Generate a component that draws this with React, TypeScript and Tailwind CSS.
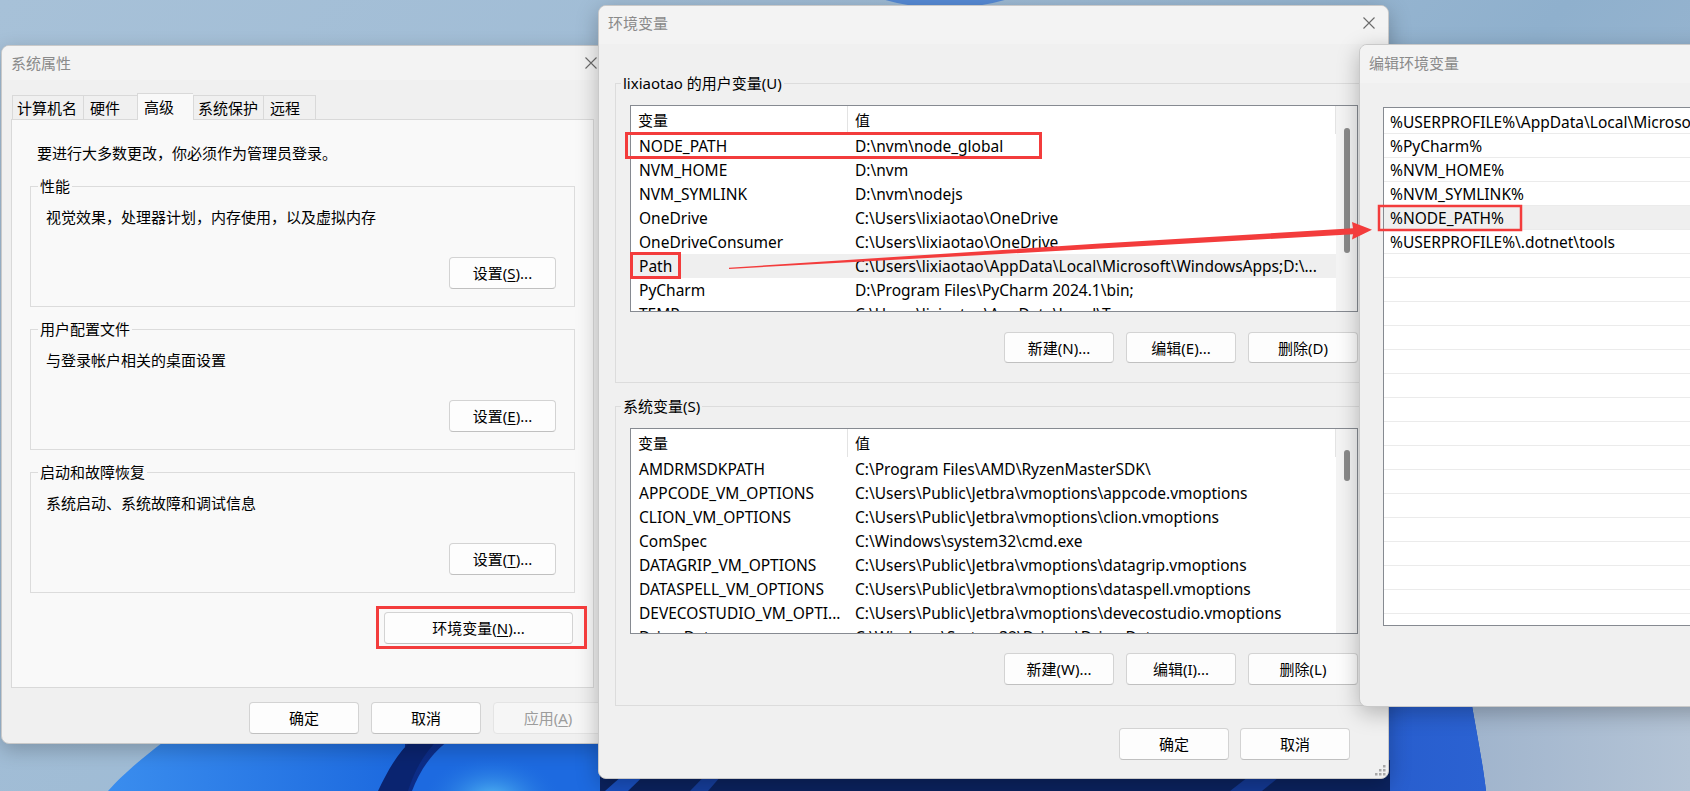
import React from "react";

const F = "font-['Noto_Sans','Noto_Sans_CJK_SC',sans-serif]";

function XIcon() {
  return (
    <svg width="12" height="12" viewBox="0 0 12 12" className="shrink-0">
      <path d="M0.5 0.5 L11.5 11.5 M11.5 0.5 L0.5 11.5" stroke="#6b6b6b" strokeWidth="1.1" />
    </svg>
  );
}

function Btn({
  className = "",
  disabled = false,
  children,
}: {
  className?: string;
  disabled?: boolean;
  children: React.ReactNode;
}) {
  return (
    <div
      className={`flex shrink-0 items-center justify-center rounded-[4px] border ${
        disabled
          ? "border-[#e4e4e4] bg-[#f6f6f6] text-[#9c9c9c]"
          : "border-[#d3d3d3] border-b-[#c0c0c0] bg-[#fdfdfd] text-black"
      } ${className}`}
    >
      {children}
    </div>
  );
}

function U({ children }: { children: React.ReactNode }) {
  return <span className="underline underline-offset-[2px]">{children}</span>;
}

/* ---------------- wallpaper ---------------- */
function Wallpaper() {
  return (
    <svg className="absolute inset-0" width="1690" height="791" viewBox="0 0 1690 791">
      <defs>
        <linearGradient id="sky" x1="0" y1="0" x2="1" y2="0.4">
          <stop offset="0" stopColor="#a7c1d8" />
          <stop offset="0.55" stopColor="#9dbad4" />
          <stop offset="0.8" stopColor="#8fb0cd" />
          <stop offset="1" stopColor="#9cb7d1" />
        </linearGradient>
        <linearGradient id="skyB" x1="0" y1="0" x2="1" y2="0">
          <stop offset="0" stopColor="#98aec9" />
          <stop offset="1" stopColor="#b4c4d6" />
        </linearGradient>
        <linearGradient id="bloomL" x1="0" y1="0" x2="1" y2="0">
          <stop offset="0" stopColor="#3a8dee" />
          <stop offset="0.25" stopColor="#1763dc" />
          <stop offset="1" stopColor="#0b45c0" />
        </linearGradient>
        <linearGradient id="bloomR" x1="0" y1="0" x2="1" y2="0">
          <stop offset="0" stopColor="#0c2c86" />
          <stop offset="0.4" stopColor="#1646b8" />
          <stop offset="1" stopColor="#2b62d2" />
        </linearGradient>
        <radialGradient id="cyan" cx="0.5" cy="0.5" r="0.5">
          <stop offset="0" stopColor="#58c0f5" />
          <stop offset="1" stopColor="#1e6ee0" stopOpacity="0" />
        </radialGradient>
      </defs>
      <rect width="1690" height="791" fill="url(#sky)" />
      <rect x="1380" y="690" width="310" height="101" fill="url(#skyB)" />
      <ellipse cx="945" cy="-58" rx="125" ry="66" fill="#3d7ad6" opacity="0.75" />
      <path d="M108 791 C125 772 150 750 200 716 L200 640 L1470 640 L1471 700 C1477 735 1483 765 1486 791 Z" fill="url(#bloomL)" />
      <path d="M405 791 L405 700 L1470 700 L1471 700 C1477 735 1483 765 1486 791 Z" fill="url(#bloomR)" />
      <path d="M378 791 C388 770 398 752 414 738 L440 738 C424 752 414 772 408 791 Z" fill="#0a2470" />
      <path d="M412 791 C420 770 432 752 452 738 L600 738 L600 791 Z" fill="#1d6ae0" />
      <ellipse cx="492" cy="800" rx="70" ry="45" fill="url(#cyan)" />
      <path d="M600 760 L1390 760 L1390 791 L600 791 Z" fill="#0b2360" />
      <path d="M605 791 L640 760 L660 760 L628 791 Z" fill="#1a52c4" />
      <path d="M690 791 L720 760 L735 760 L708 791 Z" fill="#163f9e" />
      <path d="M1230 791 L1270 760 L1300 760 L1262 791 Z" fill="#143a96" />
    </svg>
  );
}

/* ---------------- 系统属性 ---------------- */
function Tab({
  w,
  pl,
  selected = false,
  last = false,
  children,
}: {
  w: string;
  pl: string;
  selected?: boolean;
  last?: boolean;
  children: React.ReactNode;
}) {
  return (
    <div
      className={`${w} ${pl} shrink-0 flex items-center border-l border-t border-[#d9d9d9] ${
        selected ? "h-[27px] bg-[#f9f9f9]" : "h-[25px] border-b bg-[#f0f0f0]"
      } ${last ? "border-r" : ""}`}
    >
      {children}
    </div>
  );
}

function Group({ title, desc, btn }: { title: string; desc: string; btn: React.ReactNode }) {
  return (
    <fieldset className="ml-[18px] w-[545px] border border-[#dcdcdc] pl-[7px] pr-[18px] pb-[17px]">
      <legend className="px-[2px] leading-[20px]">{title}</legend>
      <div className="mt-[11px] ml-[8px]">{desc}</div>
      <div className="mt-[30px] flex justify-end">
        <Btn className="w-[107px] h-[32px]">{btn}</Btn>
      </div>
    </fieldset>
  );
}

function SystemProps() {
  return (
    <div className="absolute left-[1px] top-[45px] w-[604px] h-[699px] rounded-[8px] border border-[#c9c9c9] bg-[#f0f0f0] shadow-[0_6px_20px_rgba(0,0,0,0.22)] overflow-hidden flex flex-col">
      <div className="h-[34px] shrink-0 flex items-center justify-between pl-[9px] pr-[7px] bg-[#f3f3f3] text-[#8a8a8a]">
        <span>系统属性</span>
        <XIcon />
      </div>
      <div className="mt-[13px] ml-[10px] h-[27px] -mb-px flex items-end relative z-10 shrink-0">
        <Tab w="w-[71px]" pl="pl-[4px]">计算机名</Tab>
        <Tab w="w-[54px]" pl="pl-[6px]">硬件</Tab>
        <Tab w="w-[56px]" pl="pl-[6px]" selected>
          高级
        </Tab>
        <Tab w="w-[70px]" pl="pl-[4px]">系统保护</Tab>
        <Tab w="w-[53px]" pl="pl-[6px]" last>
          远程
        </Tab>
      </div>
      <div className="ml-[9px] w-[583px] h-[569px] shrink-0 border border-[#d9d9d9] bg-[#f9f9f9] flex flex-col">
        <div className="mt-[23px] pl-[25px]">要进行大多数更改，你必须作为管理员登录。</div>
        <div className="mt-[13px]">
          <Group
            title="性能"
            desc="视觉效果，处理器计划，内存使用，以及虚拟内存"
            btn={
              <>
                设置(<U>S</U>)...
              </>
            }
          />
        </div>
        <div className="mt-[12px]">
          <Group
            title="用户配置文件"
            desc="与登录帐户相关的桌面设置"
            btn={
              <>
                设置(<U>E</U>)...
              </>
            }
          />
        </div>
        <div className="mt-[12px]">
          <Group
            title="启动和故障恢复"
            desc="系统启动、系统故障和调试信息"
            btn={
              <>
                设置(<U>T</U>)...
              </>
            }
          />
        </div>
        <div className="mt-[19px] ml-[372px]">
          <Btn className="w-[189px] h-[32px]">
            环境变量(<U>N</U>)...
          </Btn>
        </div>
      </div>
      <div className="mt-[14px] ml-[247px] flex gap-[12px]">
        <Btn className="w-[110px] h-[32px]">确定</Btn>
        <Btn className="w-[110px] h-[32px]">取消</Btn>
        <Btn className="w-[110px] h-[32px]" disabled>
          应用(<U>A</U>)
        </Btn>
      </div>
    </div>
  );
}

/* ---------------- 环境变量 ---------------- */
type Row = { name: string; value: string; hl?: boolean };

const userRows: Row[] = [
  { name: "NODE_PATH", value: String.raw`D:\nvm\node_global` },
  { name: "NVM_HOME", value: String.raw`D:\nvm` },
  { name: "NVM_SYMLINK", value: String.raw`D:\nvm\nodejs` },
  { name: "OneDrive", value: String.raw`C:\Users\lixiaotao\OneDrive` },
  { name: "OneDriveConsumer", value: String.raw`C:\Users\lixiaotao\OneDrive` },
  { name: "Path", value: String.raw`C:\Users\lixiaotao\AppData\Local\Microsoft\WindowsApps;D:\...`, hl: true },
  { name: "PyCharm", value: String.raw`D:\Program Files\PyCharm 2024.1\bin;` },
  { name: "TEMP", value: String.raw`C:\Users\lixiaotao\AppData\Local\Temp` },
];

const sysRows: Row[] = [
  { name: "AMDRMSDKPATH", value: String.raw`C:\Program Files\AMD\RyzenMasterSDK\ ` },
  { name: "APPCODE_VM_OPTIONS", value: String.raw`C:\Users\Public\Jetbra\vmoptions\appcode.vmoptions` },
  { name: "CLION_VM_OPTIONS", value: String.raw`C:\Users\Public\Jetbra\vmoptions\clion.vmoptions` },
  { name: "ComSpec", value: String.raw`C:\Windows\system32\cmd.exe` },
  { name: "DATAGRIP_VM_OPTIONS", value: String.raw`C:\Users\Public\Jetbra\vmoptions\datagrip.vmoptions` },
  { name: "DATASPELL_VM_OPTIONS", value: String.raw`C:\Users\Public\Jetbra\vmoptions\dataspell.vmoptions` },
  { name: "DEVECOSTUDIO_VM_OPTI...", value: String.raw`C:\Users\Public\Jetbra\vmoptions\devecostudio.vmoptions` },
  { name: "DriverData", value: String.raw`C:\Windows\System32\Drivers\DriverData` },
];

function VarTable({ rows, h, thumbTop, thumbH }: { rows: Row[]; h: string; thumbTop: number; thumbH: number }) {
  return (
    <div className={`${h} w-[728px] border border-[#868a91] bg-white flex overflow-hidden`}>
      <div className="w-[705px] shrink-0 flex flex-col overflow-hidden">
        <div className="h-[28px] shrink-0 flex">
          <div className="w-[217px] shrink-0 pl-[7px] flex items-center border-r border-[#e3e3e3]">变量</div>
          <div className="flex-1 pl-[7px] flex items-center border-r border-[#e3e3e3]">值</div>
        </div>
        {rows.map((r) => (
          <div
            key={r.name}
            className={`h-[24px] shrink-0 flex items-center text-[15.5px] ${r.hl ? "bg-[#efefef]" : ""}`}
          >
            <div className="w-[217px] shrink-0 pl-[8px] whitespace-nowrap overflow-hidden">{r.name}</div>
            <div className="flex-1 min-w-0 pl-[7px] whitespace-nowrap overflow-hidden">{r.value}</div>
          </div>
        ))}
      </div>
      <div className="flex-1 bg-[#f4f4f4] relative">
        <div
          className="absolute left-[8px] w-[6px] rounded-[3px] bg-[#8a8a8a]"
          style={{ top: thumbTop, height: thumbH }}
        />
      </div>
    </div>
  );
}

function Grip() {
  const dots = [
    [8, 0],
    [4, 4],
    [8, 4],
    [0, 8],
    [4, 8],
    [8, 8],
  ];
  return (
    <svg className="absolute right-[2px] bottom-[2px]" width="11" height="11" viewBox="0 0 11 11">
      {dots.map(([x, y], i) => (
        <rect key={i} x={x} y={y} width="2.5" height="2.5" fill="#a8a8a8" />
      ))}
    </svg>
  );
}

function EnvVars() {
  return (
    <div className="absolute left-[598px] top-[5px] w-[791px] h-[774px] rounded-[8px] border border-[#c9c9c9] bg-[#f0f0f0] shadow-[0_6px_22px_rgba(0,0,0,0.26)] overflow-hidden flex flex-col">
      <div className="h-[38px] shrink-0 flex items-start justify-between pl-[9px] pr-[13px] pt-[7px] bg-[#f3f3f3] text-[#8a8a8a]">
        <span>环境变量</span>
        <div className="mt-[4px]">
          <XIcon />
        </div>
      </div>
      <div className="pt-[29px] px-[16px] flex flex-col">
        <fieldset className="w-[757px] border border-[#dcdcdc] pl-[14px] pr-[13px] pb-[19px]">
          <legend className="-ml-[9px] px-[2px] leading-[20px]">lixiaotao 的用户变量(U)</legend>
          <div className="mt-[12px]">
            <VarTable rows={userRows} h="h-[207px]" thumbTop={22} thumbH={125} />
          </div>
          <div className="mt-[20px] flex justify-end gap-[12px]">
            <Btn className="w-[110px] h-[31px]">新建(N)...</Btn>
            <Btn className="w-[110px] h-[31px]">编辑(E)...</Btn>
            <Btn className="w-[110px] h-[31px]">删除(D)</Btn>
          </div>
        </fieldset>
        <fieldset className="mt-[13px] w-[757px] border border-[#dcdcdc] pl-[14px] pr-[13px] pb-[20px]">
          <legend className="-ml-[9px] px-[2px] leading-[20px]">系统变量(S)</legend>
          <div className="mt-[12px]">
            <VarTable rows={sysRows} h="h-[206px]" thumbTop={21} thumbH={31} />
          </div>
          <div className="mt-[19px] flex justify-end gap-[12px]">
            <Btn className="w-[110px] h-[32px]">新建(W)...</Btn>
            <Btn className="w-[110px] h-[32px]">编辑(I)...</Btn>
            <Btn className="w-[110px] h-[32px]">删除(L)</Btn>
          </div>
        </fieldset>
        <div className="mt-[22px] flex justify-end gap-[11px] pr-[22px]">
          <Btn className="w-[110px] h-[32px]">确定</Btn>
          <Btn className="w-[110px] h-[32px]">取消</Btn>
        </div>
      </div>
      <Grip />
    </div>
  );
}

/* ---------------- 编辑环境变量 ---------------- */
const editRows = [
  String.raw`%USERPROFILE%\AppData\Local\Microsoft\WindowsApps`,
  "%PyCharm%",
  "%NVM_HOME%",
  "%NVM_SYMLINK%",
  "%NODE_PATH%",
  String.raw`%USERPROFILE%\.dotnet\tools`,
];

function EditEnv() {
  const rows = Array.from({ length: 22 }, (_, i) => editRows[i] ?? "");
  return (
    <div className="absolute left-[1359px] top-[44px] w-[420px] h-[663px] rounded-[8px] border border-[#c9c9c9] bg-[#f0f0f0] shadow-[0_6px_22px_rgba(0,0,0,0.26)] overflow-hidden flex flex-col">
      <div className="h-[38px] shrink-0 pl-[9px] pt-[8px] bg-[#f3f3f3] text-[#8a8a8a]">编辑环境变量</div>
      <div className="mt-[24px] ml-[23px] w-[400px] h-[519px] border border-[#868a91] bg-white pt-[2px] overflow-hidden flex flex-col">
        {rows.map((t, i) => (
          <div
            key={i}
            className={`h-[24px] shrink-0 border-b border-[#ebebeb] pl-[6px] flex items-center whitespace-nowrap text-[15.5px] ${
              i === 4 ? "bg-[#efefef]" : ""
            }`}
          >
            {t}
          </div>
        ))}
      </div>
    </div>
  );
}

/* ---------------- annotations ---------------- */
function Annotations() {
  const red = "#f33c3c";
  return (
    <svg className="absolute inset-0 pointer-events-none" width="1690" height="791" viewBox="0 0 1690 791">
      <rect x="626.5" y="133.5" width="414" height="24" fill="none" stroke={red} strokeWidth="3" />
      <rect x="631.5" y="253.5" width="48" height="24" fill="none" stroke={red} strokeWidth="3" />
      <rect x="1379" y="206" width="142" height="24" fill="none" stroke={red} strokeWidth="2.5" />
      <rect x="377.5" y="607.5" width="208" height="40" fill="none" stroke={red} strokeWidth="3" />
      <polygon
        points="729,267.7 1100,243.6 1353,228.2 1352,222 1372,229.8 1352,239.5 1353,234.2 1100,248.6 729,268.9"
        fill={red}
      />
    </svg>
  );
}

export default function App() {
  return (
    <div className={`relative w-[1690px] h-[791px] overflow-hidden ${F} text-[15px] leading-[20px] text-black`}>
      <Wallpaper />
      <SystemProps />
      <EnvVars />
      <EditEnv />
      <Annotations />
    </div>
  );
}
